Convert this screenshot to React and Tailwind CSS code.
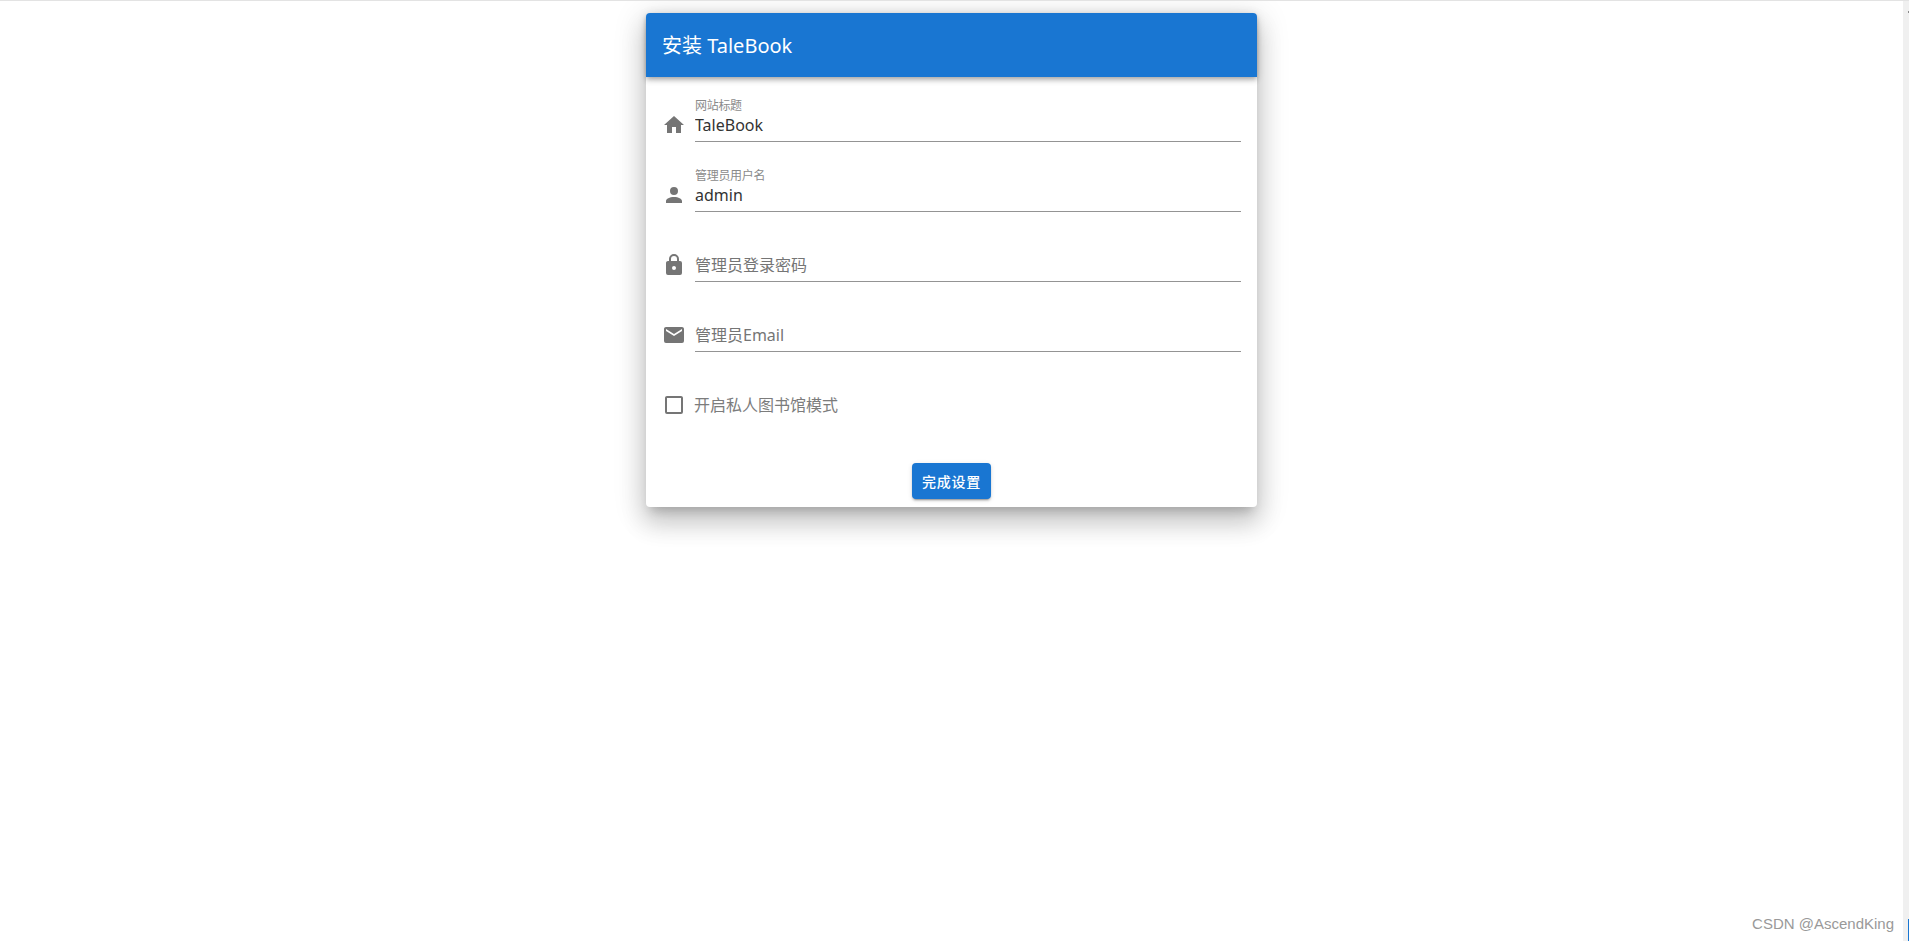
const icons = {
  home: 'M10,20V14H14V20H19V12H22L12,3L2,12H5V20H10Z',
  account: 'M12,4A4,4 0 0,1 16,8A4,4 0 0,1 12,12A4,4 0 0,1 8,8A4,4 0 0,1 12,4M12,14C16.42,14 20,15.79 20,18V20H4V18C4,15.79 7.58,14 12,14Z',
  lock: 'M12,17A2,2 0 0,0 14,15C14,13.89 13.1,13 12,13A2,2 0 0,0 10,15A2,2 0 0,0 12,17M18,8A2,2 0 0,1 20,10V20A2,2 0 0,1 18,22H6A2,2 0 0,1 4,20V10C4,8.89 4.9,8 6,8H7V6A5,5 0 0,1 12,1A5,5 0 0,1 17,6V8H18M12,3A3,3 0 0,0 9,6V8H15V6A3,3 0 0,0 12,3Z',
  email: 'M20,8L12,13L4,8V6L12,11L20,6M20,4H4C2.89,4 2,4.89 2,6V18A2,2 0 0,0 4,20H20A2,2 0 0,0 22,18V6C22,4.89 21.1,4 20,4Z',
  checkbox: 'M19,3H5C3.89,3 3,3.89 3,5V19A2,2 0 0,0 5,21H19A2,2 0 0,0 21,19V5C21,3.89 20.1,3 19,3M19,5V19H5V5H19Z',
};

function Icon({ name }) {
  return (
    <svg viewBox="0 0 24 24" className="h-6 w-6 shrink-0 fill-[#757575]">
      <path d={icons[name]} />
    </svg>
  );
}

const fields = [
  { icon: 'home', label: '网站标题', value: 'TaleBook' },
  { icon: 'account', label: '管理员用户名', value: 'admin' },
  { icon: 'lock', placeholder: '管理员登录密码' },
  { icon: 'email', placeholder: '管理员Email' },
];

function Field({ icon, label, value, placeholder }) {
  return (
    <div className="mb-[26px] flex items-end">
      <div className="mb-[5px] mr-[9px] flex h-6 items-center">
        <Icon name={icon} />
      </div>
      <div className="flex-1 border-b border-[#949494] pb-[5px]">
        <div className="h-[17px] text-[12px] leading-[15px] tracking-[-0.3px] text-[#8a8a8a]">{label}</div>
        <input
          defaultValue={value}
          placeholder={placeholder}
          className="block h-[21px] w-full bg-transparent text-[16px] leading-[21px] text-[#333333] outline-none placeholder:text-[#757575]"
        />
      </div>
    </div>
  );
}

export default function App() {
  return (
    <div className="relative flex h-[941px] w-full overflow-hidden border-t border-[#e3e3e3] bg-white font-['Noto_Sans','Noto_Sans_CJK_SC',sans-serif]">
      <div className="min-w-0 flex-1">
        <div className="mx-auto mt-3 w-[611px] rounded-[4px] bg-white shadow-[0_8px_10px_-5px_rgba(0,0,0,0.2),0_16px_24px_2px_rgba(0,0,0,0.14),0_6px_30px_5px_rgba(0,0,0,0.12)]">
          <div className="relative flex h-16 items-center rounded-t-[4px] bg-[#1976d2] px-4 pt-[2px] text-[20px] text-white shadow-[0_2px_4px_-1px_rgba(0,0,0,0.2),0_4px_5px_0_rgba(0,0,0,0.14),0_1px_10px_0_rgba(0,0,0,0.12)]">
            安装 TaleBook
          </div>
          <div className="px-4 pb-2 pt-[21px]">
            {fields.map((field) => (
              <Field key={field.icon} {...field} />
            ))}
            <div className="flex h-[44px] items-end">
              <div className="mb-[5px] mr-2 flex h-6 items-center">
                <Icon name="checkbox" />
              </div>
              <span className="mb-[5px] text-[16px] leading-[24px] text-[#7c7c7c]">开启私人图书馆模式</span>
            </div>
            <div className="mt-[41px] flex justify-center">
              <button className="h-9 w-[79px] rounded-[4px] bg-[#1976d2] text-[14px] font-medium tracking-[0.8px] text-white shadow-[0_3px_1px_-2px_rgba(0,0,0,0.2),0_2px_2px_0_rgba(0,0,0,0.14),0_1px_5px_0_rgba(0,0,0,0.12)]">
                完成设置
              </button>
            </div>
          </div>
        </div>
      </div>
      <div className="flex w-[6px] shrink-0 flex-col items-end justify-between bg-[#f0f0f0]">
        <div className="mt-[10px] h-[2px] w-px bg-[#8a8a8a]" />
        <div className="h-[22px] w-px bg-[#1976d2]" />
      </div>
      <div className="absolute bottom-[9px] right-[15px] font-['Liberation_Sans',sans-serif] text-[15px] leading-[17px] text-[#999999]">
        CSDN @AscendKing
      </div>
    </div>
  );
}
